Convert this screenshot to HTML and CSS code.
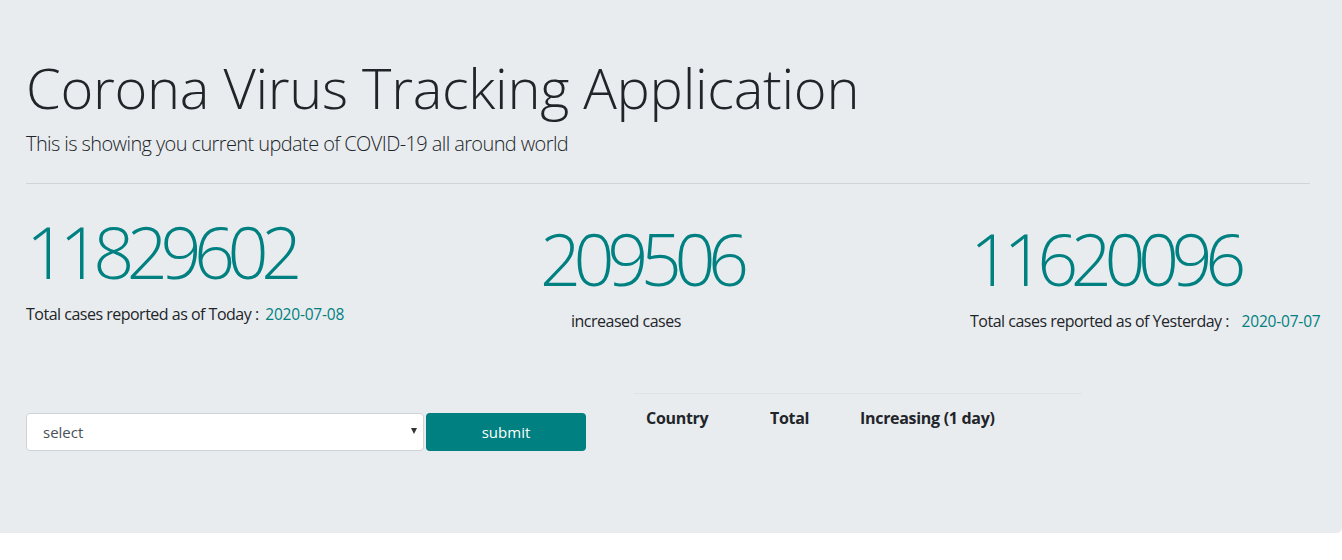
FILE: index.html
```html
<!DOCTYPE html>
<html>
<head>
<meta charset="utf-8">
<title>Corona Virus Tracking Application</title>
<link rel="stylesheet" href="styles.css">
</head>
<body>
<div class="jumbotron">
  <h1 class="title">Corona Virus Tracking Application</h1>
  <p class="lead">This is showing you current update of COVID-19 all around world</p>
  <hr class="divider">
  <div class="stats">
    <div class="stat stat-today">
      <div class="num">11829602</div>
      <p class="caption">Total cases reported as of Today : <span class="date">2020-07-08</span></p>
    </div>
    <div class="stat stat-inc">
      <div class="num">209506</div>
      <p class="caption caption-inc">increased cases</p>
    </div>
    <div class="stat stat-yest">
      <div class="num">11620096</div>
      <p class="caption">Total cases reported as of Yesterday : <span class="date">2020-07-07</span></p>
    </div>
  </div>
  <div class="bottom">
    <form class="picker">
      <div class="select-wrap">
        <select class="select"><option>select</option></select>
      </div>
      <button type="button" class="submit">submit</button>
    </form>
    <table class="table">
      <thead>
        <tr><th class="c-country">Country</th><th class="c-total">Total</th><th class="c-inc">Increasing (1 day)</th></tr>
      </thead>
    </table>
  </div>
</div>
</body>
</html>
```

FILE: styles.css
```css
html, body {
  margin: 0;
  background: #ffffff;
}
body {
  font-family: "Open Sans", "Liberation Sans", sans-serif;
  color: #212529;
  font-size: 16px;
  line-height: 1.5;
}
.jumbotron {
  background: #e9ecef;
  height: 533px;
  box-sizing: border-box;
  padding: 54px 32px 0 26px;
  border-radius: 0 0 5px 0;
}
.title {
  font-size: 56px;
  font-weight: 300;
  line-height: 1.2;
  letter-spacing: -0.3px;
  margin: 0 0 8px;
}
.lead {
  font-size: 20px;
  font-weight: 300;
  letter-spacing: -0.6px;
  margin: 0;
}
.divider {
  border: 0;
  border-top: 1px solid rgba(0, 0, 0, 0.1);
  margin: 24px 0 24px;
}
.stats {
  display: grid;
  grid-template-columns: 514px 430px 1fr;
}
.num {
  font-size: 72px;
  font-weight: 300;
  line-height: 1.2;
  letter-spacing: -7.5px;
  color: #008080;
}
.stat-inc, .stat-yest {
  padding-top: 7px;
}
.caption {
  margin: 7px 0 0;
  font-size: 16px;
  letter-spacing: -0.5px;
  white-space: nowrap;
}
.caption-inc {
  padding-left: 31px;
}
.date {
  color: #008080;
  font-size: 15.5px;
  letter-spacing: -0.2px;
  margin-left: 3px;
}
.stat-yest .date {
  margin-left: 9px;
}
.bottom {
  display: flex;
  align-items: flex-start;
  margin-top: 60px;
}
.picker {
  display: flex;
  gap: 2px;
  margin: 20px 48px 0 0;
}
.select-wrap {
  position: relative;
  width: 398px;
}
.select-wrap::after {
  content: "";
  position: absolute;
  right: 7px;
  top: 15px;
  border-left: 3.5px solid transparent;
  border-right: 3.5px solid transparent;
  border-top: 6px solid #333;
}
.select {
  appearance: none;
  -webkit-appearance: none;
  width: 100%;
  height: 38px;
  box-sizing: border-box;
  background: #ffffff;
  border: 1px solid #ced4da;
  border-radius: 4px;
  padding: 0 16px;
  font-family: inherit;
  font-size: 15px;
  color: #495057;
}
.submit {
  width: 160px;
  height: 38px;
  background: #008080;
  border: 0;
  border-radius: 4px;
  color: #ffffff;
  font-family: inherit;
  font-size: 15px;
}
.table {
  width: 448px;
  border-collapse: collapse;
}
.table th {
  text-align: left;
  padding: 12px;
  border-top: 1px solid #dee2e6;
  font-weight: 700;
  font-size: 16px;
  letter-spacing: -0.3px;
}
.c-country { width: 100px; }
.c-total { width: 66px; }
```
